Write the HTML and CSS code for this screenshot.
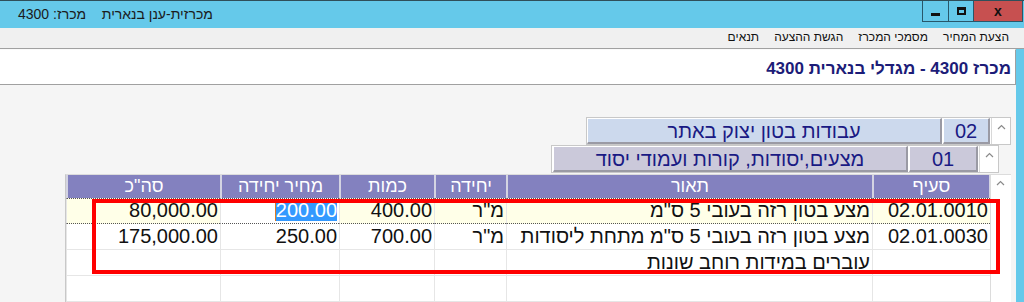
FILE: index.html
```html
<!DOCTYPE html>
<html lang="he">
	<head>
		<meta charset="UTF-8">
		<title>מכרזית</title>
		<link rel="stylesheet" href="styles.css">
	</head>
	<body>
		<div class="window">
			<div class="titlebar">
				<span class="title" dir="rtl">מכרזית-ענן בנארית&nbsp;&nbsp;&nbsp;&nbsp;מכרז: 4300</span>
				<div class="controls">
					<span class="btn min"><i></i></span>
					<span class="btn max"><i></i></span>
					<span class="btn close">x</span>
				</div>
			</div>
			<div class="menubar" dir="rtl">
				<span>הצעת המחיר</span>
				<span>מסמכי המכרז</span>
				<span>הגשת ההצעה</span>
				<span>תנאים</span>
			</div>
			<div class="frame">
				<div class="client">
					<div class="header" dir="rtl">מכרז 4300 - מגדלי בנארית 4300</div>
					<div class="content">
						<div class="tree tree-top">
							<div class="cell name">עבודות בטון יצוק באתר</div>
							<div class="cell code">02</div>
							<div class="sb"><svg width="9" height="6" viewBox="0 0 9 6"><polyline points="1,5 4.5,1.5 8,5" fill="none" stroke="#8a8a8a" stroke-width="1.2"/></svg></div>
						</div>
						<div class="tree tree-sub">
							<div class="cell name">מצעים,יסודות, קורות ועמודי יסוד</div>
							<div class="cell code">01</div>
							<div class="sb"><svg width="9" height="6" viewBox="0 0 9 6"><polyline points="1,5 4.5,1.5 8,5" fill="none" stroke="#8a8a8a" stroke-width="1.2"/></svg></div>
						</div>
						<div class="grid-wrap">
							<div class="grid" dir="rtl">
								<div class="th">סעיף</div>
								<div class="th">תאור</div>
								<div class="th">יחידה</div>
								<div class="th">כמות</div>
								<div class="th">מחיר יחידה</div>
								<div class="th">סה"כ</div>

								<div class="td cur">02.01.0010</div>
								<div class="td cur">מצע בטון רזה בעובי 5 ס"מ</div>
								<div class="td cur">מ"ר</div>
								<div class="td cur">400.00</div>
								<div class="td cur edit"><span class="sel">200.00</span></div>
								<div class="td cur">80,000.00</div>

								<div class="td">02.01.0030</div>
								<div class="td">מצע בטון רזה בעובי 5 ס"מ מתחת ליסודות</div>
								<div class="td">מ"ר</div>
								<div class="td">700.00</div>
								<div class="td">250.00</div>
								<div class="td">175,000.00</div>

								<div class="td"></div>
								<div class="td">עוברים במידות רוחב שונות</div>
								<div class="td"></div>
								<div class="td"></div>
								<div class="td"></div>
								<div class="td"></div>

								<div class="td"></div>
								<div class="td"></div>
								<div class="td"></div>
								<div class="td"></div>
								<div class="td"></div>
								<div class="td"></div>
							</div>
							<div class="vscroll"><svg width="9" height="6" viewBox="0 0 9 6"><polyline points="1,5 4.5,1.5 8,5" fill="none" stroke="#8a8a8a" stroke-width="1.2"/></svg></div>
						</div>
						<div class="mark"></div>
					</div>
				</div>
				<div class="edge"></div>
			</div>
		</div>
	</body>
</html>
```

FILE: styles.css
```css
* {
	margin: 0;
	padding: 0;
	box-sizing: border-box;
}

body {
	font-family: "Liberation Sans", Arial, sans-serif;
	background: #f5f5f5;
}

.window {
	width: 1024px;
	height: 302px;
	display: flex;
	flex-direction: column;
	overflow: hidden;
}

.titlebar {
	height: 28px;
	background: #65c9ea;
	border-top: 1px solid #2f4f5a;
	display: flex;
	align-items: flex-start;
	padding-left: 18px;
}

.title {
	font-size: 14px;
	color: #1b1b1b;
	line-height: 27px;
}

.controls {
	margin-left: auto;
	margin-right: 1px;
	display: flex;
}

.btn {
	height: 21px;
	border: 1px solid #28576a;
	border-top: none;
	display: flex;
	align-items: center;
	justify-content: center;
}

.min {
	width: 27px;
}

.min i {
	display: block;
	width: 9px;
	height: 3px;
	background: #111;
	margin-top: 6px;
}

.max {
	width: 25px;
	border-left: none;
}

.max i {
	display: block;
	width: 9px;
	height: 8px;
	border: 2px solid #111;
	border-top-width: 3px;
}

.close {
	width: 49px;
	border-left: none;
	background: #c75050;
	color: #111;
	font-weight: bold;
	font-size: 14px;
	line-height: 18px;
}

.menubar {
	height: 21px;
	background: #f0f0f0;
	border-bottom: 1px solid #a0a0a0;
	display: flex;
	gap: 15px;
	padding-right: 15px;
	font-size: 12px;
	line-height: 19px;
	color: #111;
}

.frame {
	flex: 1;
	display: flex;
	min-height: 0;
}

.client {
	flex: 1;
	display: flex;
	flex-direction: column;
}

.edge {
	width: 8px;
	background: #65c9ea;
}

.header {
	height: 36px;
	background: #fff;
	border-bottom: 1px solid #a0a0a0;
	border-right: 1px solid #a0a0a0;
	border-top: 1px solid #fafafa;
	padding-right: 4px;
	font-size: 17px;
	font-weight: bold;
	color: #1c1c78;
	line-height: 38px;
}

.content {
	flex: 1;
	position: relative;
	display: flex;
	flex-direction: column;
	align-items: flex-end;
	background: #f5f5f5;
}

.tree {
	height: 28px;
	display: flex;
	border: 1px solid #c8c8c8;
	background: #fff;
}

.tree-top {
	margin-top: 32px;
	margin-right: 5px;
}

.tree-sub {
	margin-right: 17px;
}

.cell {
	border-top: 1px solid #fff;
	border-left: 1px solid #fff;
	border-bottom: 2px solid #9a9aa4;
	border-right: 2px solid #9a9aa4;
	font-size: 20px;
	color: #1a1a84;
	text-align: center;
	line-height: 24px;
}

.tree-top .cell {
	background: #ccd9ed;
}

.tree-sub .cell {
	background: #cbc9da;
}

.tree-top .name {
	width: 355px;
}

.tree-top .code {
	width: 47px;
	margin-left: 1px;
}

.tree-sub .name {
	width: 355px;
	margin-left: 1px;
}

.tree-sub .code {
	width: 69px;
	margin-left: 1px;
}

.sb {
	width: 19px;
	margin-left: 1px;
	border-left: 1px solid #d8d8d8;
	display: flex;
	justify-content: center;
	padding-top: 6px;
}

.grid-wrap {
	align-self: flex-start;
	margin-top: 1px;
	margin-left: 65px;
	width: 946px;
	flex: 1;
	display: flex;
	border-left: 1px solid #c8c8c8;
	border-top: 1px solid #dcdcdc;
	background: #fff;
}

.grid {
	display: grid;
	grid-template-columns: 118px 366px 72px 95px 119px 154px;
	grid-template-rows: 23px 26px 26px 26px 26px;
	width: 924px;
}

.th {
	background: #8381bf;
	color: #fff;
	font-size: 18px;
	text-align: center;
	line-height: 23px;
	border-left: 2px solid #d4d4e2;
}

.th:first-child {
	border-right: 1px solid #d4d4e2;
}

.td {
	font-size: 20px;
	color: #111;
	line-height: 25px;
	padding-right: 2px;
	border-left: 1px solid #e6e6e6;
	border-bottom: 1px solid #e6e6e6;
	white-space: nowrap;
}

.td.cur {
	background: #ffffe8;
	border-top: 1px dotted #555;
	border-bottom: 1px dotted #555;
	line-height: 23px;
}

.td.edit {
	background: #fff;
}

.sel {
	background: #3399ff;
	color: #fff;
	border-left: 1px solid #e07a20;
}

.vscroll {
	width: 20px;
	border-left: 1px solid #dcdcdc;
	display: flex;
	justify-content: center;
	padding-top: 5px;
}

.mark {
	position: absolute;
	left: 92px;
	top: 114px;
	width: 908px;
	height: 75px;
	border: 4px solid #ff0000;
}
```
